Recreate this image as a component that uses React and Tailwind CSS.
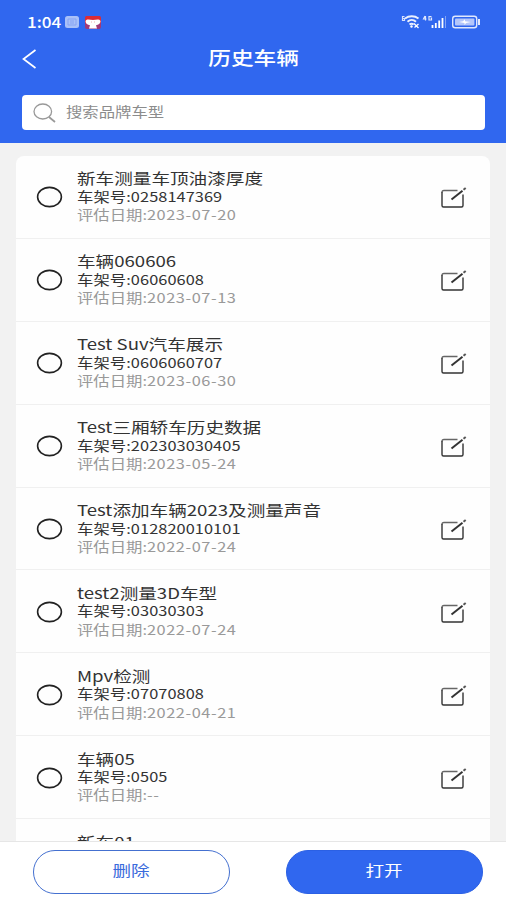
import React from "react";

const vehicles = [
  { name: "新车测量车顶油漆厚度", vin: "0258147369", date: "2023-07-20" },
  { name: "车辆060606", vin: "06060608", date: "2023-07-13" },
  { name: "Test Suv汽车展示", vin: "0606060707", date: "2023-06-30" },
  { name: "Test三厢轿车历史数据", vin: "202303030405", date: "2023-05-24" },
  { name: "Test添加车辆2023及测量声音", vin: "012820010101", date: "2022-07-24" },
  { name: "test2测量3D车型", vin: "03030303", date: "2022-07-24" },
  { name: "Mpv检测", vin: "07070808", date: "2022-04-21" },
  { name: "车辆05", vin: "0505", date: "--" },
  { name: "新车01" },
];

const StatusBar = () => (
  <div className="flex h-[44px] items-center pl-[27px] pr-[25px] text-white">
    <span className="w-[38px] shrink-0 pb-[2px]">
      <span className="inline-block origin-left scale-x-[1.14] text-[15px] leading-none font-medium font-['Noto_Sans_CJK_SC',sans-serif]">
        1:04
      </span>
    </span>
    <svg className="h-[12px] w-[14px] shrink-0" viewBox="0 0 14 12">
      <rect width="14" height="12" rx="2.5" fill="#a9c0f8" />
      <path d="M3 3h8v6H3zM5 5h4M5 7h4" fill="none" stroke="#86a3f4" />
    </svg>
    <svg className="ml-[6px] h-[13px] w-[16px] shrink-0" viewBox="0 0 16 13">
      <path d="M1.500 0h13Q16 0 16 1.500V7H0V1.500Q0 0 1.500 0z" fill="#dc2b35" />
      <path d="M0 7h16v4q0 2-2 2H2q-2 0-2-2z" fill="#a03a78" />
      <path
        d="M.5 5C2 2.500 5 4 8 4s6-1.500 7.500 1c0 2.500-2 4-4.500 4.200l1 3.300H4l1-3.300C2.500 9 .5 7.500.5 5z"
        fill="#fff"
      />
      <path d="M6 6h1M9 6h1" stroke="#e9a0a0" strokeWidth=".8" />
    </svg>
    {/* Network and battery */}
    <svg
      className="ml-auto h-[16px] w-[81px] shrink-0"
      viewBox="400 14 81 16"
      fill="none"
      stroke="#fff"
    >
      <path d="M404.500 16.500h-2v4h2v-2h-2" strokeWidth="1.200" opacity=".8" />
      <path
        d="M405 18.500c4-3 9.500-3 13.500 0M407.500 21.700c2.500-2.300 6-2.300 8.500 0M409.500 24.500c1.300-1 2.900-1 4.200 0"
        strokeWidth="1.900"
        opacity=".9"
      />
      <circle cx="411.500" cy="26.500" r="1.200" fill="#fff" stroke="none" />
      <path d="M414 23.500l4.500 4.500M418.500 24l-4 3.500" strokeWidth="1.300" />
      <path
        d="M425 16l-1.500 3h3M425.500 16v4.500M431.500 16.500h-2.500v3.500h2.500v-2h-1"
        strokeWidth="1.200"
        opacity=".85"
      />
      <path d="M432.500 25v3M435.800 23v5M439.200 20.500v7.500M442.500 18v10" strokeWidth="1.800" />
      <path d="M445.500 16v12" strokeWidth="1" opacity=".4" />
      <rect x="452.700" y="16.200" width="24" height="11.600" rx="2.500" strokeWidth="1.400" opacity=".85" />
      <rect x="455" y="18.500" width="19.400" height="7" rx="1" fill="#b3c6fb" stroke="none" />
      <path d="M459 22l4-.8 2-2v2l6 .8-5 1-1.500 2v-2z" fill="#fff" stroke="none" />
      <path d="M479 19v6" strokeWidth="2" opacity=".85" />
    </svg>
  </div>
);

const EditIcon = () => (
  <svg
    className="mt-[2px] h-[22px] w-[27px] shrink-0"
    viewBox="0 0 27 22"
    fill="none"
    stroke="#333"
    strokeWidth="1.400"
  >
    <path d="M17.500 3.500H4Q2 3.500 2 5.500" stroke="#666" />
    <path d="M2 5v13.500q0 1.500 1.500 1.500h18q1.500 0 1.500-1.500V7.500" />
    <path d="M11.500 12.500l11-8.700" strokeWidth="2" />
    <path d="M23.500 2.700l2.200-1.700" strokeWidth="2" stroke="#555" />
  </svg>
);

const VehicleRow = ({ vehicle }) => (
  <div className="flex h-[82.9px] shrink-0 items-center border-b border-[#f0f0f0] pl-[20px] pr-[23px] pt-px">
    <svg className="h-[22px] w-[27px] shrink-0" viewBox="0 0 27 22">
      <ellipse cx="13.500" cy="11" rx="11.900" ry="9.600" fill="none" stroke="#222" strokeWidth="1.600" />
    </svg>
    <div className="ml-[13.700px] h-[58px] min-w-0 flex-1 origin-left scale-x-[1.24] whitespace-nowrap">
      <p className="text-[15px] leading-[19.5px] text-[#333]">{vehicle.name}</p>
      {vehicle.vin && (
        <>
          <p className="text-[13.2px] leading-[18.3px] tracking-[0.05px] text-[#333]">
            车架号:{vehicle.vin}
          </p>
          <p className="text-[13.2px] leading-[18.3px] text-[#999]">
            评估日期:<span className="tracking-[0.45px]">{vehicle.date}</span>
          </p>
        </>
      )}
    </div>
    <EditIcon />
  </div>
);

const App = () => {
  return (
    <div className="flex h-[900px] w-[506px] flex-col overflow-hidden bg-[#f2f2f2] font-['Noto_Sans_CJK_SC',sans-serif]">
      {/* Header */}
      <header className="h-[143px] shrink-0 bg-[#3067ef]">
        <StatusBar />
        <div className="grid h-[30px] grid-cols-[1fr_auto_1fr] items-center text-white">
          <svg className="ml-[22px] h-[20px] w-[15px]" viewBox="0 0 15 20" fill="none" stroke="#fff" strokeWidth="1.700">
            <path d="M13.500 1L1.500 10l12 9" />
          </svg>
          <h1 className="ml-[2px] scale-x-[1.24] pb-[4px] text-[18.3px] leading-none font-medium">历史车辆</h1>
        </div>
        <div className="ml-[22px] mr-[21px] mt-[21px] flex h-[35px] items-center rounded-[4px] bg-white pl-[11px]">
          <svg className="h-[20px] w-[24px]" viewBox="0 0 24 20" fill="none" stroke="#999" strokeWidth="1.300">
            <ellipse cx="9.800" cy="8.500" rx="8.800" ry="7.500" />
            <path d="M16 14l6 5" strokeWidth="1.700" />
          </svg>
          <span className="ml-[9px] origin-left scale-x-[1.24] pb-px text-[13.2px] leading-none text-[#8c8c8c]">
            搜索品牌车型
          </span>
        </div>
      </header>

      {/* Vehicle list */}
      <main className="mx-[16px] mt-[13px] flex min-h-0 flex-1 flex-col overflow-hidden rounded-t-[8px] bg-[#fefefe]">
        {vehicles.map((vehicle) => (
          <VehicleRow key={vehicle.name} vehicle={vehicle} />
        ))}
      </main>

      {/* Bottom actions */}
      <footer className="flex h-[59px] shrink-0 items-start justify-between border-t border-[#e6e6e6] bg-white pl-[32.500px] pr-[23px] pt-[7.500px]">
        <button className="h-[44px] w-[197px] rounded-full border border-[#4470d0] pb-[3px] text-[15px] text-[#3a6bdc]">
          <span className="inline-block scale-x-[1.24]">删除</span>
        </button>
        <button className="h-[44px] w-[197px] rounded-full border border-[#2b60e4] bg-[#3067ef] pb-[3px] text-[15px] text-white">
          <span className="inline-block scale-x-[1.24]">打开</span>
        </button>
      </footer>
    </div>
  );
};

export default App;
